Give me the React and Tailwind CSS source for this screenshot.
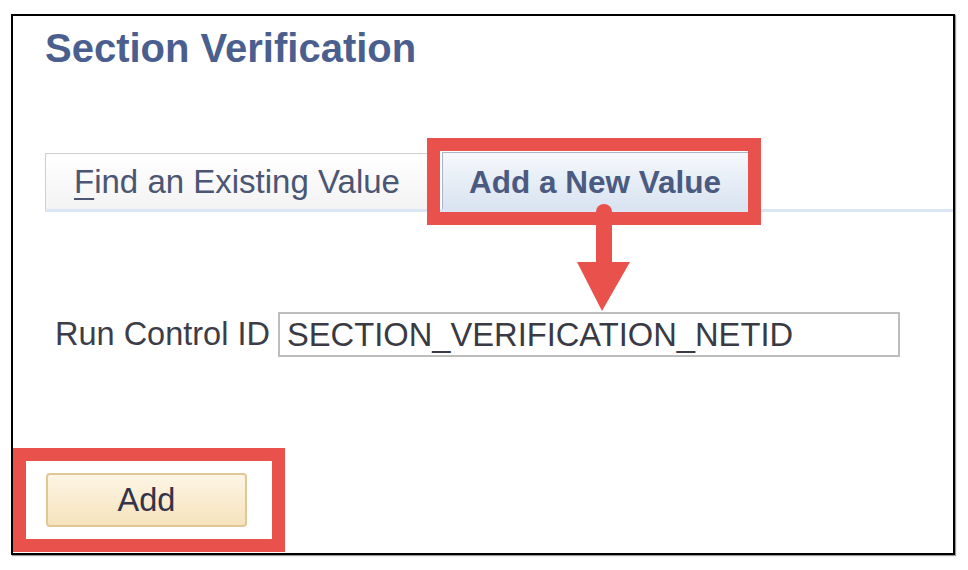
export default function App() {
  return (
    <div
      className="relative w-[968px] h-[570px] bg-white overflow-hidden"
      style={{ fontFamily: '"Liberation Sans", Arial, sans-serif' }}
    >
      {/* framed screenshot */}
      <div className="absolute left-[11px] top-[14px] w-[944px] h-[541px] border-2 border-black shadow-[1px_1px_1px_#9a9a9a] bg-white flex flex-col">
        <h1 className="mt-[12px] ml-[32px] text-[40px] leading-none font-bold text-[#4b5f8f]">
          Section Verification
        </h1>

        {/* tabs */}
        <div className="mt-[84px] ml-[32px] flex items-end">
          <div className="w-[386px] h-[56px] border-t border-l border-[#cfcfcf] bg-gradient-to-b from-white to-[#f3f3f3] pl-[28px] text-[33px] leading-[56px] text-[#4a5672] whitespace-nowrap">
            <span className="underline underline-offset-[5px] decoration-2">F</span>ind an Existing Value
          </div>
          <div className="ml-[11px] w-[307px] h-[57px] border-t border-l border-[#a9b5c9] bg-gradient-to-b from-[#f6f8fb] to-[#d9e3f1] pl-[26px] pt-[2px] text-[31.5px] leading-[55px] font-bold text-[#4a5a80] whitespace-nowrap">
            Add a New Value
          </div>
        </div>
        <div className="ml-[32px] h-[3px] bg-[#dbe5f3]" />

        {/* run control */}
        <div className="mt-[100px] ml-[42px] flex items-center gap-[8px]">
          <span className="text-[32.5px] leading-none text-[#3d3d48] whitespace-nowrap">Run Control ID</span>
          <div className="w-[622px] h-[45px] border-2 border-[#bdbdbd] pl-[7px] text-[32.7px] leading-[41px] text-[#3a3a44] whitespace-nowrap">
            SECTION_VERIFICATION_NETID
          </div>
        </div>

        <button className="mt-[116px] ml-[33px] w-[201px] h-[54px] rounded-[4px] border-2 border-[#e2c796] bg-gradient-to-b from-[#fdf5e4] to-[#f6e3bd] text-[32.5px] leading-none text-[#33334a]">
          Add
        </button>
      </div>

      {/* annotations */}
      <div className="absolute left-[427px] top-[138px] w-[334px] h-[87px] border-[13px] border-[#e9514c]" />
      <div className="absolute left-[13px] top-[448px] w-[272px] h-[104px] border-[13px] border-[#e9514c]" />
      <svg className="absolute left-0 top-0" width="968" height="570" viewBox="0 0 968 570">
        <line x1="604" y1="212" x2="604" y2="264" stroke="#e9514c" strokeWidth="16" strokeLinecap="round" />
        <polygon points="577,262 630,262 602,311" fill="#e9514c" />
      </svg>
    </div>
  );
}
